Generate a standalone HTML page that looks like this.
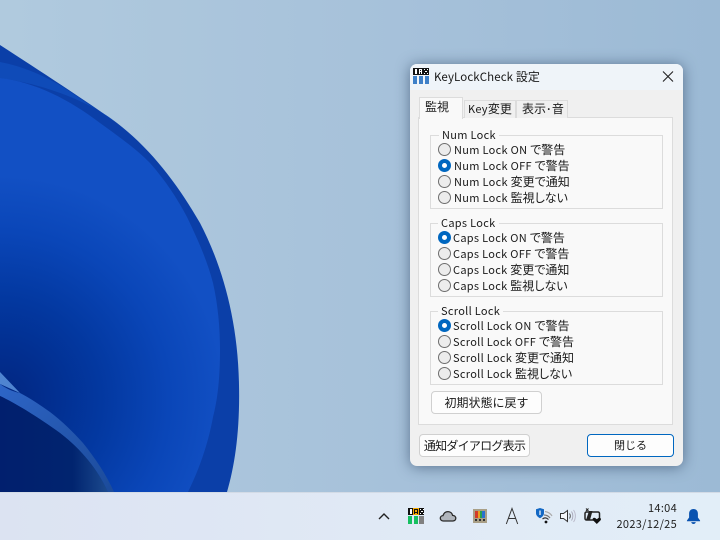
<!DOCTYPE html>
<html lang="ja"><head><meta charset="utf-8"><title>KeyLockCheck 設定</title>
<style>
html,body{margin:0;padding:0}
body{width:720px;height:540px;overflow:hidden;position:relative;background:#a6c0d9;font-family:"Liberation Sans","Noto Sans CJK JP",sans-serif;color:#1a1a1a}
.a{position:absolute}
.t{position:absolute;white-space:nowrap;font-size:11px;line-height:16px;font-family:"Noto Sans CJK JP",sans-serif;letter-spacing:.3px}
.t b,.b b{font-weight:400;font-size:12px;letter-spacing:0;font-feature-settings:"palt"}
.win{position:absolute;left:410px;top:64px;width:273px;height:402px;background:#f0f0f0;border-radius:7px;box-shadow:0 1px 14px rgba(30,50,80,.55);overflow:hidden}
.bar{position:absolute;left:0;top:0;width:273px;height:26px;background:#eff4f9}
.r{position:absolute;width:11px;height:11px;border:1px solid #6e6e6e;border-radius:50%;background:#ececec}
.r.on{width:5px;height:5px;border:4px solid #0067c0;background:#fff}
.g{position:absolute;left:430px;width:231px;height:72px;border:1px solid #dcdcdc}
.leg{position:absolute;background:#f9f9f9;padding:0 3px}
.b{position:absolute;box-sizing:border-box;height:23px;background:#fdfdfd;border:1px solid #d0d0d0;border-radius:4px;font-size:12px;line-height:21px;text-align:center;font-family:"Noto Sans CJK JP",sans-serif;white-space:nowrap}
</style></head><body>
<svg class="a" style="left:0;top:0" width="720" height="540" viewBox="0 0 720 540">
<defs>
<linearGradient id="bg" x1="0" y1="0" x2="1" y2="0"><stop offset="0" stop-color="#b0cade"/><stop offset=".55" stop-color="#a6c1da"/><stop offset="1" stop-color="#9cbad5"/></linearGradient>
<radialGradient id="blue" gradientUnits="userSpaceOnUse" cx="0" cy="400" r="225"><stop offset="0" stop-color="#01257f"/><stop offset=".45" stop-color="#0338a0"/><stop offset=".75" stop-color="#0a46b8"/><stop offset="1" stop-color="#1250c4"/></radialGradient>
<linearGradient id="low" gradientUnits="userSpaceOnUse" x1="0" y1="0" x2="112" y2="0"><stop offset="0" stop-color="#011f6e"/><stop offset=".65" stop-color="#01246f"/><stop offset="1" stop-color="#1f4f92"/></linearGradient>
<linearGradient id="band" gradientUnits="userSpaceOnUse" x1="0" y1="380" x2="110" y2="490"><stop offset="0" stop-color="#2e66c8"/><stop offset=".5" stop-color="#2558b0"/><stop offset="1" stop-color="#1c4c9c"/></linearGradient>
</defs>
<rect width="720" height="540" fill="url(#bg)"/>
<path d="M0 45C40 71 85 100 117 123C152 150 178 185 200 223C222 265 238 320 239 385C240 430 235 465 227 492L0 492Z" fill="#0b3fa8"/>
<path d="M0 62C22 66 45 76 63 87L117 123C95 105 50 85 0 78Z" fill="#0f4bb8"/>
<path d="M0 78C35 82 70 100 100 123C118 136 135 148 150 163C165 180 177 198 187 217C198 240 207 260 213 283C218 305 220 328 220 350C220 375 218 398 213 417C208 445 198 472 188 492L0 492Z" fill="url(#blue)"/>
<path d="M0 372L20 393L0 384Z" fill="#4f84d0"/>
<path d="M0 384C8 390 15 392 20 393C30 398 40 405 50 412C62 421 73 432 83 443C95 458 106 474 114 492L108 492C98 470 82 450 60 433C38 417 15 403 0 396Z" fill="url(#band)"/>
<path d="M0 396C15 403 38 417 60 433C82 450 98 470 108 492L0 492Z" fill="url(#low)"/>
</svg>
<div class="a" style="left:0;top:492px;width:720px;height:48px;background:linear-gradient(90deg,#dce3f2,#e0e9f5 50%,#e2eef8);border-top:1px solid #d3dbe6;box-sizing:border-box"></div>

<div class="win"><div class="bar"></div></div>
<svg class="a" style="left:413px;top:68px" width="16" height="16" viewBox="0 0 16 16" shape-rendering="crispEdges"><rect width="16" height="7" fill="#111"/><path d="M2 1h2v5H2zM6 1h3v1H6zM6 3h3v1H6zM6 2h1v4H6zM8 2h1v4H8zM11 1h1v1h-1zM14 1h1v1h-1zM12 3h2v1h-2zM11 5h1v1h-1zM14 5h1v1h-1z" fill="#fff"/><path d="M0 8h4v8H0zM6 8h4v8H6zM12 8h4v8h-4z" fill="#3e80c8"/></svg>
<div class="t" style="left:434px;top:69px;font-size:11.500px;letter-spacing:.1px">KeyLockCheck <b>設定</b></div>
<svg class="a" style="left:662px;top:70px" width="12" height="12" viewBox="0 0 12 12"><path d="M1 1.500L11 11.500M11 1.500L1 11.500" stroke="#222" stroke-width="1.100" fill="none"/></svg>

<div class="a" style="left:418px;top:117px;width:253px;height:306px;background:#f9f9f9;border:1px solid #dcdcdc"></div>
<div class="a" style="left:464px;top:100px;width:50px;height:17px;background:#f0f0f0;border:1px solid #dcdcdc;border-bottom:0"></div>
<div class="a" style="left:516px;top:100px;width:50px;height:17px;background:#f0f0f0;border:1px solid #dcdcdc;border-bottom:0"></div>
<div class="a" style="left:419px;top:97px;width:44px;height:22px;background:#f9f9f9;border:1px solid #dcdcdc;border-bottom:0;box-sizing:border-box"></div>
<div class="t" style="left:425px;top:99px"><b>監視</b></div>
<div class="t" style="left:468px;top:101px">Key<b>変更</b></div>
<div class="t" style="left:522px;top:101px"><b>表示</b>･<b>音</b></div>

<div class="g" style="top:135px"></div>
<div class="t leg" style="left:439px;top:127px">Num Lock</div>
<div class="r" style="left:438px;top:143px"></div><div class="t" style="left:454px;top:142px">Num Lock ON <b>で警告</b></div>
<div class="r on" style="left:438px;top:159px"></div><div class="t" style="left:454px;top:158px">Num Lock OFF <b>で警告</b></div>
<div class="r" style="left:438px;top:175px"></div><div class="t" style="left:454px;top:174px">Num Lock <b>変更で通知</b></div>
<div class="r" style="left:438px;top:191px"></div><div class="t" style="left:454px;top:190px">Num Lock <b>監視しない</b></div>

<div class="g" style="top:223px"></div>
<div class="t leg" style="left:438px;top:215px">Caps Lock</div>
<div class="r on" style="left:438px;top:231px"></div><div class="t" style="left:453px;top:230px">Caps Lock ON <b>で警告</b></div>
<div class="r" style="left:438px;top:247px"></div><div class="t" style="left:453px;top:246px">Caps Lock OFF <b>で警告</b></div>
<div class="r" style="left:438px;top:263px"></div><div class="t" style="left:453px;top:262px">Caps Lock <b>変更で通知</b></div>
<div class="r" style="left:438px;top:279px"></div><div class="t" style="left:453px;top:278px">Caps Lock <b>監視しない</b></div>

<div class="g" style="top:311px"></div>
<div class="t leg" style="left:438px;top:303px">Scroll Lock</div>
<div class="r on" style="left:438px;top:319px"></div><div class="t" style="left:453px;top:318px">Scroll Lock ON <b>で警告</b></div>
<div class="r" style="left:438px;top:335px"></div><div class="t" style="left:453px;top:334px">Scroll Lock OFF <b>で警告</b></div>
<div class="r" style="left:438px;top:351px"></div><div class="t" style="left:453px;top:350px">Scroll Lock <b>変更で通知</b></div>
<div class="r" style="left:438px;top:367px"></div><div class="t" style="left:453px;top:366px">Scroll Lock <b>監視しない</b></div>

<div class="b" style="left:431px;top:391px;width:111px">初期状態に戻す</div>
<div class="b" style="left:419px;top:434px;width:111px;letter-spacing:-.75px">通知ダイアログ表示</div>
<div class="b" style="left:587px;top:434px;width:87px;border-color:#0067c0;font-size:11px">閉じる</div>

<svg class="a" style="left:378px;top:511px" width="12" height="10" viewBox="0 0 12 10"><path d="M1 8L6 3L11 8" stroke="#222" stroke-width="1.400" fill="none"/></svg>
<svg class="a" style="left:408px;top:508px" width="16" height="16" viewBox="0 0 16 16" shape-rendering="crispEdges"><rect width="16" height="7" fill="#111"/><path d="M2 1h2v5H2z" fill="#fff"/><rect x="5" y="0" width="6" height="7" fill="#f5a800"/><path d="M6 1h4v1H6zM6 2h1v4H6zM9 2h1v4H9zM7 4h2v1H7z" fill="#111"/><path d="M12 1h1v1h-1zM15 1h1v1h-1zM13 3h2v1h-2zM12 5h1v1h-1zM15 5h1v1h-1z" fill="#fff"/><path d="M0 8h4v8H0zM6 8h4v8H6z" fill="#16c060"/><rect x="11" y="8" width="5" height="8" fill="#808080"/></svg>
<svg class="a" style="left:439px;top:509px" width="18" height="14" viewBox="0 0 18 14"><path d="M4.500 12C2.500 12 1.300 10.800 1.300 9.200C1.300 7.600 2.600 6.600 4 6.600C4.800 4 6.800 2.600 9 2.600C11.500 2.600 13.200 4.300 13.600 6.400C15.400 6.500 16.800 7.600 16.800 9.300C16.800 10.900 15.500 12 13.800 12Z" fill="#b0b5bc" stroke="#2a2a2a" stroke-width="1.300"/></svg>
<svg class="a" style="left:473px;top:509px" width="14" height="14" viewBox="0 0 14 14" shape-rendering="crispEdges"><rect width="14" height="14" fill="#a99f86"/><rect x="2" y="2" width="3" height="7" fill="#d23a2a"/><rect x="5" y="2" width="2" height="7" fill="#e8a020"/><rect x="7" y="2" width="2" height="7" fill="#28a050"/><rect x="9" y="2" width="3" height="7" fill="#2a70d0"/><rect x="2" y="10" width="2" height="2" fill="#333"/><rect x="6" y="10" width="2" height="2" fill="#333"/><rect x="10" y="10" width="2" height="2" fill="#333"/></svg>
<svg class="a" style="left:505px;top:507px" width="14" height="18" viewBox="0 0 14 18"><path d="M1.300 17L7 1.500L12.700 17M3.400 11.500H10.600" stroke="#333" stroke-width="1" fill="none"/></svg>
<svg class="a" style="left:535px;top:507px" width="18" height="18" viewBox="0 0 18 18"><path d="M5 1L9 2.300V6C9 8.500 7.300 10 5 11.200C2.700 10 1 8.500 1 6V2.300Z" fill="#1268c4"/><path d="M5 3.500V8" stroke="#fff" stroke-width="1.200"/><path d="M10 4.500C13 5 15.500 6.500 17 9" stroke="#aaa" stroke-width="1.200" fill="none"/><path d="M9 8C11.500 8 13.500 9 15 11" stroke="#777" stroke-width="1.200" fill="none"/><path d="M7.500 12C9.500 10.500 11.500 10.500 13.500 12.500" stroke="#333" stroke-width="1.200" fill="none"/><circle cx="11" cy="15" r="1.400" fill="#111"/></svg>
<svg class="a" style="left:559px;top:507px" width="18" height="18" viewBox="0 0 18 18"><path d="M1.500 6.500H4.500L8.500 3.500V14.500L4.500 11.500H1.500Z" fill="#f4f7fb" stroke="#333" stroke-width="1"/><path d="M10.500 6.500C11.500 8 11.500 10 10.500 11.500" stroke="#555" fill="none"/><path d="M12.500 4.500C14.300 7 14.300 11 12.500 13.500" stroke="#aab" fill="none"/><path d="M14.500 3C17 6.500 17 11.500 14.500 15" stroke="#bbc" fill="none"/></svg>
<svg class="a" style="left:584px;top:507px" width="18" height="18" viewBox="0 0 18 18"><rect x="1" y="5" width="14.500" height="8" rx="1.500" fill="none" stroke="#222" stroke-width="1.500"/><path d="M2 13L5 4H8.500L6 13Z" fill="#222"/><path d="M2 1.500L4.500 4M4.500 1.500L2 4" stroke="#222"/><path d="M12.800 17L9 13.200C7.800 11.600 9.800 10 11.200 11L12.800 12.200L14.400 11C15.800 10 17.800 11.600 16.600 13.200Z" fill="#111"/></svg>
<div class="t" style="right:43px;top:500px;color:#222">14:04</div>
<div class="t" style="right:43px;top:516px;color:#222">2023/12/25</div>
<svg class="a" style="left:686px;top:508px" width="15" height="17" viewBox="0 0 16 17"><path d="M8 .5C5 .5 3.300 2.700 3.300 5.500V9.500L1 12.800V13.500H15V12.800L12.700 9.500V5.500C12.700 2.700 11 .5 8 .5Z" fill="#0a53b0"/><path d="M5.500 14.500C6 16 7 16.500 8 16.500C9 16.500 10 16 10.500 14.500Z" fill="#0a53b0"/></svg>
</body></html>
